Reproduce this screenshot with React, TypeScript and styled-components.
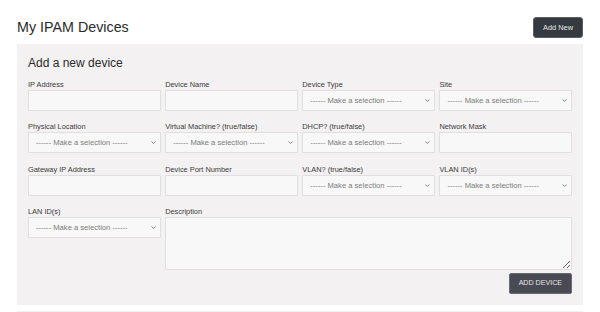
import React from "react";
import styled, { createGlobalStyle } from "styled-components";

const GlobalStyle = createGlobalStyle`
  body {
    margin: 0;
    background: #ffffff;
    font-family: "Liberation Sans", Arial, sans-serif;
    color: #212529;
  }
`;

type Field = {
  label: string;
  kind: "input" | "select";
};

const fields: Field[] = [
  { label: "IP Address", kind: "input" },
  { label: "Device Name", kind: "input" },
  { label: "Device Type", kind: "select" },
  { label: "Site", kind: "select" },
  { label: "Physical Location", kind: "select" },
  { label: "Virtual Machine? (true/false)", kind: "select" },
  { label: "DHCP? (true/false)", kind: "select" },
  { label: "Network Mask", kind: "input" },
  { label: "Gateway IP Address", kind: "input" },
  { label: "Device Port Number", kind: "input" },
  { label: "VLAN? (true/false)", kind: "select" },
  { label: "VLAN ID(s)", kind: "select" },
  { label: "LAN ID(s)", kind: "select" },
];

const Chevron = () => (
  <ChevronIcon width="5" height="3" viewBox="0 0 5 3">
    <path d="M0.5 0.5 L2.5 2.4 L4.5 0.5" fill="none" stroke="#777" strokeWidth="0.9" />
  </ChevronIcon>
);

export default function App() {
  return (
    <>
      <GlobalStyle />
      <Page>
        <Header>
          <Title>My IPAM Devices</Title>
          <DarkButton>Add New</DarkButton>
        </Header>
        <Panel>
          <PanelTitle>Add a new device</PanelTitle>
          <FormGrid>
            {fields.map((f) => (
              <FieldBox key={f.label}>
                <Label>{f.label}</Label>
                {f.kind === "input" ? (
                  <TextInput type="text" />
                ) : (
                  <SelectWrap>
                    <Select defaultValue="">
                      <option value="">------ Make a selection ------</option>
                    </Select>
                    <Chevron />
                  </SelectWrap>
                )}
              </FieldBox>
            ))}
            <DescriptionBox>
              <Label>Description</Label>
              <TextArea />
              <Actions>
                <SubmitButton>ADD DEVICE</SubmitButton>
              </Actions>
            </DescriptionBox>
          </FormGrid>
        </Panel>
        <NextPanel />
      </Page>
    </>
  );
}

const Page = styled.div`
  padding: 17px 17px 0;
`;

const Header = styled.div`
  display: flex;
  justify-content: space-between;
  align-items: center;
  height: 21px;
`;

const Title = styled.h1`
  margin: 0;
  font-size: 14.3px;
  line-height: 21px;
  font-weight: 400;
  color: #2b2b2b;
`;

const DarkButton = styled.button`
  height: 21px;
  padding: 0 9px;
  border: 1px solid #5a5e63;
  border-radius: 3px;
  background: #343a40;
  color: #e8e8e8;
  font-family: "Liberation Sans", Arial, sans-serif;
  font-size: 7.4px;
`;

const Panel = styled.div`
  margin-top: 6px;
  background: #f3f1f2;
  padding: 12px 11px 11px;
`;

const NextPanel = styled.div`
  margin-top: 6px;
  height: 20px;
  background: #f3f1f2;
`;

const PanelTitle = styled.h2`
  margin: 0 0 10px;
  font-size: 12px;
  line-height: 14px;
  font-weight: 400;
  color: #2b2b2b;
`;

const FormGrid = styled.div`
  display: grid;
  grid-template-columns: repeat(4, 1fr);
  column-gap: 4.5px;
  row-gap: 11.3px;
`;

const FieldBox = styled.div`
  display: flex;
  flex-direction: column;
`;

const DescriptionBox = styled(FieldBox)`
  grid-column: 2 / 5;
`;

const Label = styled.label`
  display: block;
  font-size: 7.4px;
  line-height: 9px;
  margin-bottom: 1px;
  color: #3a3a3a;
`;

const TextInput = styled.input`
  box-sizing: border-box;
  height: 21px;
  width: 100%;
  margin: 0;
  border: 1px solid #e0dede;
  border-radius: 1px;
  background: #f8f8f8;
  outline: none;
`;

const SelectWrap = styled.div`
  position: relative;
  height: 21px;
`;

const Select = styled.select`
  display: block;
  box-sizing: border-box;
  appearance: none;
  height: 21px;
  width: 100%;
  margin: 0;
  padding: 0 0 0 7px;
  border: 1px solid #e0dede;
  border-radius: 1px;
  background: #f8f8f8;
  color: #7a7a7a;
  font-family: "Liberation Sans", Arial, sans-serif;
  font-size: 7.6px;
  outline: none;
`;

const ChevronIcon = styled.svg`
  position: absolute;
  right: 5px;
  top: 9px;
  pointer-events: none;
`;

const TextArea = styled.textarea`
  display: block;
  box-sizing: border-box;
  height: 53px;
  width: 100%;
  margin: 0;
  border: 1px solid #e0dede;
  border-radius: 1px;
  background: #f8f8f8;
  outline: none;
  resize: vertical;
`;

const Actions = styled.div`
  display: flex;
  justify-content: flex-end;
  margin-top: 3px;
`;

const SubmitButton = styled.button`
  height: 21px;
  padding: 0 9px;
  border: 1px solid #6a6a72;
  border-radius: 2px;
  background: #4a4a54;
  color: #e6e6e6;
  font-family: "Liberation Sans", Arial, sans-serif;
  font-size: 7.1px;
`;
